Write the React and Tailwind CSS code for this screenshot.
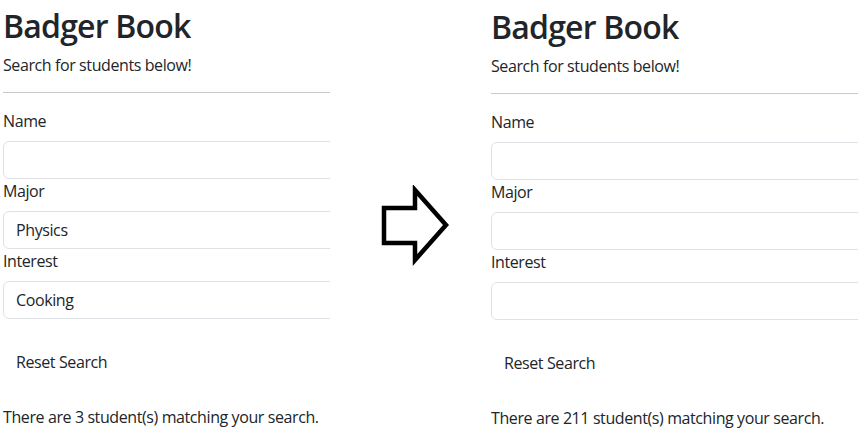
import React from "react";

function Panel({ major, interest, count, top }) {
  return (
    <div className={top}>
      <div className="w-[420px] tracking-[-0.4px]">
        <h1 className="h-[38px] mb-2 text-[32px] leading-[38px] font-semibold tracking-[-0.8px] text-[#212529]">Badger Book</h1>
        <p className="mb-[15px] text-base leading-6 text-[#212529]">Search for students below!</p>
        <hr className="border-0 border-t border-[#c8c9ca] mb-4" />
        <label className="block mb-2 text-base leading-6 text-[#212529]">Name</label>
        <div className="h-[38px] rounded-[6px] border border-[#dee2e6] px-3 leading-[36px] text-base text-[#212529]"></div>
        <label className="block mb-2 text-base leading-6 text-[#212529]">Major</label>
        <div className="h-[38px] rounded-[6px] border border-[#dee2e6] px-3 leading-[36px] text-base text-[#212529]">{major}</div>
        <label className="block mb-2 text-base leading-6 text-[#212529]">Interest</label>
        <div className="h-[38px] rounded-[6px] border border-[#dee2e6] px-3 leading-[36px] text-base text-[#212529]">{interest}</div>
        <button className="mt-6 h-[38px] border border-transparent px-3 text-base leading-6 text-[#212529]">Reset Search</button>
        <p className="mt-6 text-base leading-6 text-[#212529]">There are {count} student(s) matching your search.</p>
      </div>
    </div>
  );
}

export default function App() {
  return (
    <div className="flex w-[863px] h-[444px] bg-white overflow-hidden" style={{ fontFamily: '"Open Sans", "Noto Sans", sans-serif' }}>
      <div className="w-[330px] shrink-0 overflow-hidden pl-[3px]">
        <Panel major="Physics" interest="Cooking" count={3} top="pt-[7px]" />
      </div>
      <div className="w-[161px] shrink-0">
        <svg className="ml-[50px] mt-[185px]" width="72" height="81" viewBox="0 0 72 81">
          <polygon points="4,23 35,23 35,5 66,40 35,75 35,58 4,58" fill="none" stroke="#000" strokeWidth="4.5" strokeLinejoin="miter" />
        </svg>
      </div>
      <div className="w-[367px] shrink-0 overflow-hidden">
        <Panel major="" interest="" count={211} top="pt-[8px]" />
      </div>
    </div>
  );
}
